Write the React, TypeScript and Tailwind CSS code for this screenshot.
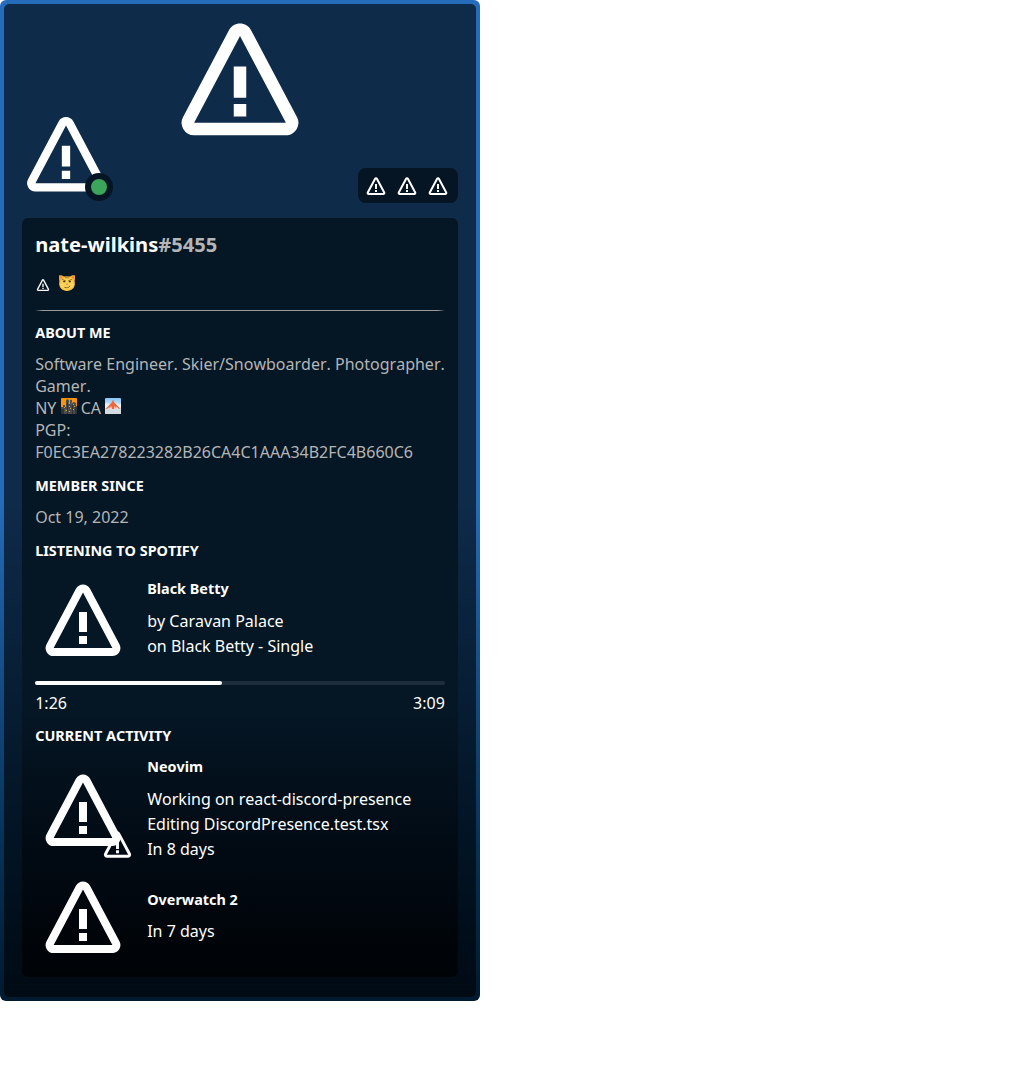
import { BiError } from "react-icons/bi";

const heading = "text-[14.4px] leading-5 font-bold";

function SmirkCat() {
  return (
    <svg viewBox="0 0 16 16" className="size-4">
      <defs>
        <radialGradient id="fur" cx="50%" cy="55%" r="60%">
          <stop offset="55%" stopColor="#fdd24f" />
          <stop offset="100%" stopColor="#f3a12f" />
        </radialGradient>
      </defs>
      <path d="M0 .4C1.500-.1 3.500.5 5 1.500c2-.4 4-.4 6 0C12.500.5 14.500-.1 16 .4c.2 2 0 4-.4 5.600C16.800 12 13.500 16 8 16S-.8 12 .4 6C0 4.400-.2 2.400 0 .4z" fill="url(#fur)" />
      <path d="M1 1.400l2.400 1.100L1.400 4.500zM15 1.400l-2.400 1.100 2 2z" fill="#e98a3a" />
      <path d="M3.500 4.600l3 1.200M12.500 4.600l-3 1.200M7 1.500v1.600M9 1.500v1.600M5.800 12.500c2 .7 4.200.2 5-1.200" stroke="#6f4d24" strokeWidth=".8" fill="none" strokeLinecap="round" />
      <path d="M4.200 6.700h2M9.800 6.700h2" stroke="#3b3328" strokeWidth="1.300" />
      <path d="M6.800 8.800h2.400L8 10.300z" fill="#f0588c" />
      <path d="M.8 9.500l2.700.2M1.500 12l2-.6M15.200 9.500l-2.700.2M14.500 12l-2-.6" stroke="#ffe9a6" strokeWidth=".6" />
    </svg>
  );
}

function SunsetCity() {
  return (
    <svg viewBox="0 0 16 16" className="inline size-4 align-[0px]">
      <rect width="16" height="16" rx="1" fill="#fb9408" />
      <path d="M0 9h2V7h2v2h1V2.500Q6.500 0 8 2.500V6h1V2.500Q10 .5 11 2.500V5l2-1 2 1v3h1v8H0z" fill="#4b4b4b" />
      <path d="M0 11h3v5H0zM6 4h1v12H6zM11 7h1v9h-1zM14 9h2v7h-2z" fill="#2f3437" />
      <path d="M3.500 9v1M5.500 12v1M8.500 8v1M9.500 10v1M12.500 6v1M13.500 8v1M12.500 11v1M8.500 13v1" stroke="#d3a02f" />
      <path d="M7.500 4v2M10.500 4v2M4.500 11v3" stroke="#707579" strokeWidth=".7" />
    </svg>
  );
}

function FoggyBridge() {
  return (
    <svg viewBox="0 0 16 16" className="inline size-4 align-[0px]">
      <defs>
        <linearGradient id="sky" x1="0" y1="0" x2="0" y2="1">
          <stop offset="0" stopColor="#83c6fa" />
          <stop offset=".35" stopColor="#b9ddf5" />
          <stop offset=".5" stopColor="#dfe5e9" />
          <stop offset="1" stopColor="#cfd8dd" />
        </linearGradient>
      </defs>
      <rect width="16" height="16" rx="1" fill="url(#sky)" />
      <path d="M0 6q2-1.500 4 0t3 0h2q2-2 4 0t3-1v5H0z" fill="#edf2f5" />
      <path d="M7.200 2.500h1.600V4l6.700 7-2-.5-1.200-1.300-.3 1.300-1-2.500-.3 2.500-1-2.500L9 11H7L6.800 8l-1 2.500-.3-2.500-1 2.500-.3-1.300L3 10.500.5 11l6.700-7z" fill="#f4653a" />
      <path d="M0 12q4-2 8 0t8-.5V15q0 1-1 1H1q-1 0-1-1z" fill="#d3dbdf" />
    </svg>
  );
}

export default function App() {
  return (
    <div className="w-[480px] h-[1001px] rounded-md bg-linear-to-b from-[#256cba] from-50% to-[#001a30] p-1 font-['Noto_Sans',sans-serif] text-white [font-kerning:none]">
      <div className="h-full rounded-[5px] bg-black/60 px-[18px]">
        <header className="relative h-[214px]">
          <BiError size={150} className="mx-auto" />
          <BiError size={100} className="absolute -left-1.5 top-[100px]" />
          <span className="absolute left-[63px] top-[169px] size-7 rounded-full border-6 border-[#051523] bg-[#3ba55c]" />
          <div className="absolute right-0 top-[164px] flex h-[35px] w-[100px] items-center justify-center gap-[7px] rounded-lg bg-[#051523] pr-[3px]">
            <BiError size={24} />
            <BiError size={24} />
            <BiError size={24} />
          </div>
        </header>
        <main className="h-[759px] rounded-md bg-linear-to-b from-[#051624] from-65% to-[#000306] px-[13.2px] pt-3.5">
          <h1 className="text-[20.1px] leading-[26px] font-bold">nate-wilkins<span className="text-[#b4b5b7]">#5455</span></h1>
          <div className="mt-3.5 flex h-6 items-center gap-2">
            <BiError size={16} className="mt-0.5" />
            <span className="-mt-0.5"><SmirkCat /></span>
          </div>
          <div className="mt-3.5 h-px bg-[linear-gradient(90deg,transparent,#999_7px,#999_calc(100%-7px),transparent)]" />
          <h2 className={`mt-3 ${heading}`}>ABOUT ME</h2>
          <p className="-mr-1 mt-2.5 h-[110px] text-base leading-[22px] text-[#b4b5b7]">
            Software Engineer. Skier/Snowboarder. Photographer.<br />Gamer.<br />
            NY <SunsetCity /> CA <FoggyBridge /><br />
            PGP:<br />F0EC3EA278223282B26CA4C1AAA34B2FC4B660C6
          </p>
          <h2 className={`mt-[13px] ${heading}`}>MEMBER SINCE</h2>
          <p className="mt-2.5 leading-[22px] text-[#b4b5b7]">Oct 19, 2022</p>
          <h2 className={`mt-[13px] ${heading}`}>LISTENING TO SPOTIFY</h2>
          <div className="mt-[11px] flex h-24 gap-4">
            <BiError size={96} />
            <div className="pt-[7px]">
              <h3 className={heading}>Black Betty</h3>
              <p className="mt-2.5 leading-[25px]">by Caravan Palace<br />on Black Betty - Single</p>
            </div>
          </div>
          <div className="mt-[13px] h-1 rounded-full bg-white/10"><div className="h-full w-[187px] rounded-full bg-white" /></div>
          <div className="mt-1.5 flex justify-between leading-6"><span>1:26</span><span>3:09</span></div>
          <h2 className={`mt-[11px] ${heading}`}>CURRENT ACTIVITY</h2>
          <div className="mt-[11px] flex h-[105px] gap-4">
            <div className="relative mt-[5px] size-24">
              <BiError size={96} />
              <BiError size={35} className="absolute left-[65px] top-[65px]" />
            </div>
            <div>
              <h3 className={heading}>Neovim</h3>
              <p className="mt-2.5 leading-[25px]">Working on react-discord-presence<br />Editing DiscordPresence.test.tsx<br />In 8 days</p>
            </div>
          </div>
          <div className="mt-[7px] flex h-24 gap-4">
            <BiError size={96} />
            <div className="pt-[21px]">
              <h3 className={heading}>Overwatch 2</h3>
              <p className="mt-[9px] leading-[25px]">In 7 days</p>
            </div>
          </div>
        </main>
      </div>
    </div>
  );
}
